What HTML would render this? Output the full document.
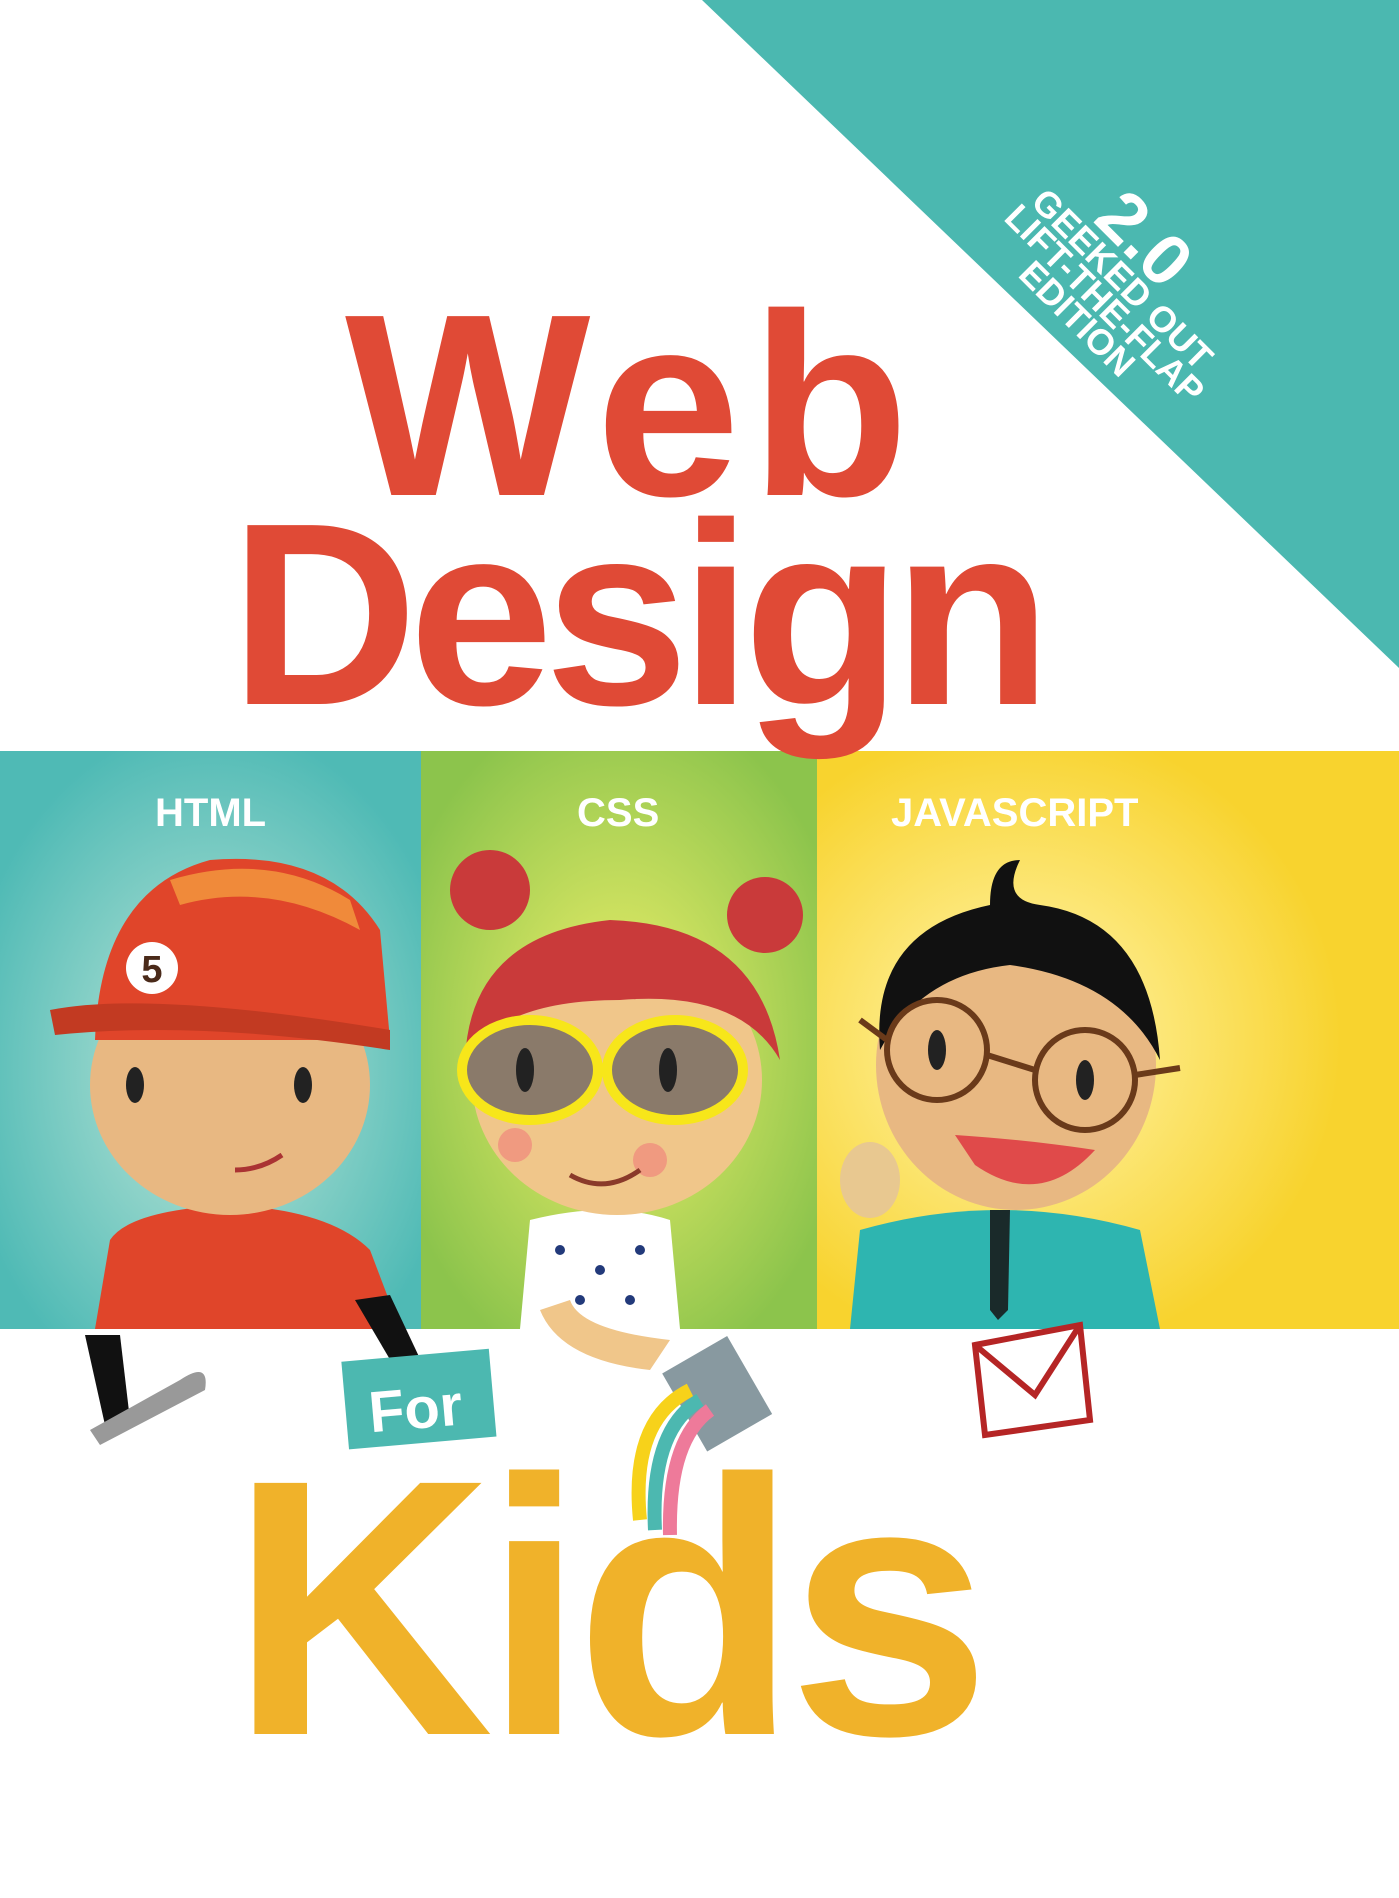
<!DOCTYPE html>
<html><head><meta charset="utf-8"><style>
html,body{margin:0;padding:0}
body{width:1399px;height:1898px;position:relative;overflow:hidden;background:#fff;font-family:"Liberation Sans",Arial,sans-serif}
.t{position:absolute;line-height:1;font-weight:bold;white-space:nowrap}
</style></head><body>
<svg width="1399" height="1898" style="position:absolute;left:0;top:0">
<defs>
<radialGradient id="gt" cx="50%" cy="55%" r="60%"><stop offset="0" stop-color="#bfe6d8"/><stop offset="1" stop-color="#4fbab5"/></radialGradient>
<radialGradient id="gg" cx="50%" cy="50%" r="60%"><stop offset="0" stop-color="#f0f06a"/><stop offset="1" stop-color="#8cc44c"/></radialGradient>
<radialGradient id="gy" cx="35%" cy="50%" r="55%"><stop offset="0" stop-color="#fff6b0"/><stop offset="1" stop-color="#f8d32e"/></radialGradient>
</defs>
<polygon points="702,0 1399,0 1399,668" fill="#4bb8b0"/>
<rect x="0" y="751" width="421" height="578" fill="url(#gt)"/>
<rect x="421" y="751" width="396" height="578" fill="url(#gg)"/>
<rect x="817" y="751" width="582" height="578" fill="url(#gy)"/>
<!-- kid 1 -->
<path d="M95,1329 L110,1240 Q130,1210 230,1205 Q330,1210 370,1250 L400,1329 Z" fill="#e0452a"/>
<ellipse cx="230" cy="1085" rx="140" ry="130" fill="#e8b882"/>
<path d="M95,1040 Q100,890 210,860 Q330,850 380,930 L390,1040 Z" fill="#e0452a"/>
<path d="M50,1010 Q150,990 390,1030 L390,1050 Q200,1020 55,1035 Z" fill="#c23a22"/>
<path d="M170,880 Q270,850 350,900 L360,930 Q270,880 180,905 Z" fill="#f08a3a"/>
<circle cx="152" cy="968" r="26" fill="#fff"/><text x="152" y="982" font-size="38" font-weight="bold" text-anchor="middle" fill="#4a2a1a">5</text>
<ellipse cx="135" cy="1085" rx="9" ry="18" fill="#222"/><ellipse cx="303" cy="1085" rx="9" ry="18" fill="#222"/>
<path d="M235,1170 Q260,1170 282,1155" stroke="#a33" stroke-width="5" fill="none"/>
<path d="M85,1335 L120,1335 L130,1420 L105,1425 Z" fill="#111"/>
<path d="M355,1300 L390,1295 L430,1380 L405,1385 Z" fill="#111"/>
<path d="M90,1430 L180,1380 Q210,1360 205,1390 L100,1445 Z" fill="#999"/>
<rect x="345" y="1355" width="148" height="88" fill="#4cb8b0" transform="rotate(-5 420 1400)"/>
<text x="368" y="1428" font-size="58" font-weight="bold" fill="#fff" transform="rotate(-5 420 1400)">For</text>
<!-- kid 2 -->
<path d="M520,1329 L530,1220 Q610,1200 670,1220 L680,1329 Z" fill="#fff"/>
<g fill="#223a7a"><circle cx="560" cy="1250" r="5"/><circle cx="600" cy="1270" r="5"/><circle cx="640" cy="1250" r="5"/><circle cx="580" cy="1300" r="5"/><circle cx="630" cy="1300" r="5"/></g>
<circle cx="490" cy="890" r="40" fill="#c93a3a"/><circle cx="765" cy="915" r="38" fill="#c93a3a"/>
<ellipse cx="617" cy="1080" rx="145" ry="135" fill="#f0c68a"/>
<path d="M465,1060 Q470,935 610,920 Q760,925 780,1060 Q740,990 620,1000 Q500,1000 465,1060 Z" fill="#c93a3a"/>
<g fill="#8a7a6a" stroke="#f7e61a" stroke-width="10"><ellipse cx="530" cy="1070" rx="68" ry="50"/><ellipse cx="675" cy="1070" rx="68" ry="50"/></g>
<ellipse cx="525" cy="1070" rx="9" ry="22" fill="#222"/><ellipse cx="668" cy="1070" rx="9" ry="22" fill="#222"/>
<circle cx="515" cy="1145" r="17" fill="#f09a80"/><circle cx="650" cy="1160" r="17" fill="#f09a80"/>
<path d="M570,1175 Q605,1195 640,1170" stroke="#8a3a2a" stroke-width="5" fill="none"/>
<path d="M540,1310 Q560,1360 650,1370 L670,1340 Q580,1330 570,1300 Z" fill="#f0c68a"/>
<rect x="680" y="1350" width="75" height="90" fill="#8899a0" transform="rotate(-30 715 1395)"/>
<path d="M690,1390 Q630,1420 640,1520" stroke="#f7d21a" stroke-width="14" fill="none"/>
<path d="M700,1400 Q650,1430 655,1530" stroke="#4cb8b0" stroke-width="14" fill="none"/>
<path d="M710,1410 Q668,1440 670,1535" stroke="#ee7a9a" stroke-width="14" fill="none"/>
<!-- kid 3 -->
<path d="M850,1329 L860,1230 Q1000,1190 1140,1230 L1160,1329 Z" fill="#2eb5b0"/>
<path d="M990,1210 L1010,1210 L1008,1310 L998,1320 L990,1310 Z" fill="#1a2a2a"/>
<ellipse cx="1016" cy="1065" rx="140" ry="145" fill="#e8b882"/>
<path d="M880,1050 Q870,930 990,905 Q990,860 1020,860 Q1000,900 1040,905 Q1150,920 1160,1060 Q1120,980 1010,965 Q920,975 880,1050 Z" fill="#111"/>
<g fill="none" stroke="#6a3a1a" stroke-width="6"><circle cx="937" cy="1050" r="50"/><circle cx="1085" cy="1080" r="50"/><path d="M987,1055 L1035,1070 M887,1040 L860,1020 M1135,1075 L1180,1068"/></g>
<ellipse cx="937" cy="1050" rx="9" ry="20" fill="#222"/><ellipse cx="1085" cy="1080" rx="9" ry="20" fill="#222"/>
<path d="M955,1135 Q1030,1140 1095,1150 Q1040,1210 975,1165 Z" fill="#e04a4a"/>
<ellipse cx="870" cy="1180" rx="30" ry="38" fill="#e8c890"/>
<path d="M975,1345 L1080,1325 L1090,1420 L985,1435 Z" fill="#fff" stroke="#b52525" stroke-width="6"/>
<path d="M975,1345 L1035,1395 L1080,1325" stroke="#b52525" stroke-width="6" fill="none"/>
</svg>
<div class="t" style="left:345px;top:276px;font-size:260px;letter-spacing:10px;color:#e04a36">Web</div>
<div class="t" style="left:230px;top:485px;font-size:260px;letter-spacing:-9px;color:#e04a36">Design</div>
<div class="t" style="left:155px;top:793px;font-size:40px;color:#fff">HTML</div>
<div class="t" style="left:577px;top:793px;font-size:40px;color:#fff">CSS</div>
<div class="t" style="left:891px;top:793px;font-size:40px;color:#fff">JAVASCRIPT</div>
<div class="t" style="left:230px;top:1426px;font-size:365px;letter-spacing:-10px;color:#f0b22a">Kids</div>
<div style="position:absolute;left:0;top:0;transform-origin:0 0;transform:rotate(45deg)">
<div class="t" style="position:absolute;left:928px;top:-676px;font-size:72px;color:#fff">2.0</div>
<div class="t" style="position:absolute;left:872px;top:-614px;font-size:36px;color:#fff">GEEKED OUT</div>
<div class="t" style="position:absolute;left:864px;top:-584px;font-size:36px;color:#fff">LIFT-THE-FLAP</div>
<div class="t" style="position:absolute;left:914px;top:-554px;font-size:36px;color:#fff">EDITION</div>
</div>
</body></html>
